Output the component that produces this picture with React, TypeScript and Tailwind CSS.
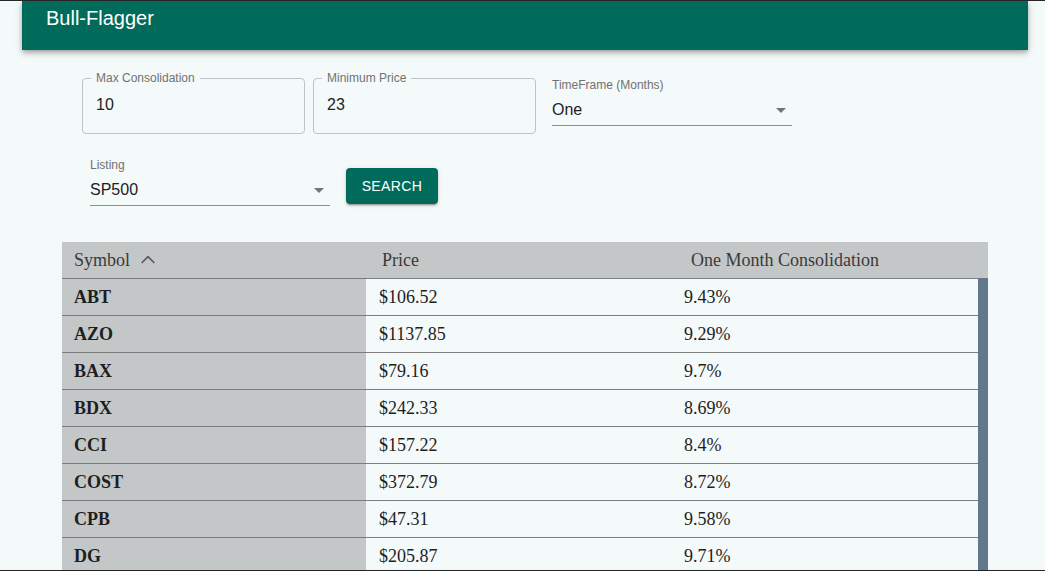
import React from "react";

const rows: [string, string, string][] = [
  ["ABT", "$106.52", "9.43%"],
  ["AZO", "$1137.85", "9.29%"],
  ["BAX", "$79.16", "9.7%"],
  ["BDX", "$242.33", "8.69%"],
  ["CCI", "$157.22", "8.4%"],
  ["COST", "$372.79", "8.72%"],
  ["CPB", "$47.31", "9.58%"],
  ["DG", "$205.87", "9.71%"],
];

function Outlined({ label, value }: { label: string; value: string }) {
  return (
    <div className="relative w-[223px] h-[56px] border border-[#bfc3c3] rounded-[4px]">
      <span className="absolute left-[8px] -top-[8px] px-[5px] bg-[#f4f9f9] text-[12px] leading-[14px] text-[#727272]">
        {label}
      </span>
      <div className="pl-[13px] pt-[16px] text-[16px] leading-[19px] text-[#222]">{value}</div>
    </div>
  );
}

function Arrow() {
  return (
    <svg width="24" height="24" viewBox="0 0 24 24" className="shrink-0">
      <path d="M7 10l5 5 5-5z" fill="#757575" />
    </svg>
  );
}

function SelectField({ label, value }: { label: string; value: string }) {
  return (
    <div className="w-[240px] flex flex-col border-b border-[#8c8f8f] pb-[6px]">
      <div className="text-[12px] leading-[14px] text-[#727272]">{label}</div>
      <div className="mt-[8px] h-[19px] flex items-center justify-between text-[16px] leading-[19px] text-[#222]">
        <span>{value}</span>
        <span className="-mr-[1px] mt-[1px]">
          <Arrow />
        </span>
      </div>
    </div>
  );
}

export default function App() {
  return (
    <div className="h-[571px] overflow-hidden bg-[#f4f9f9] border-t border-b border-[#262626] font-['Liberation_Sans',Arial,sans-serif]">
      <header className="ml-[22px] mr-[17px] h-[49px] bg-[#006b5b] px-6 pt-[5px] shadow-[0_2px_4px_-1px_rgba(0,0,0,0.2),0_4px_5px_0_rgba(0,0,0,0.14),0_1px_10px_0_rgba(0,0,0,0.12)]">
        <h1 className="text-white text-[20px] leading-[24px]">Bull-Flagger</h1>
      </header>

      <div className="mt-[28px] pl-[82px] flex items-start">
        <Outlined label="Max Consolidation" value="10" />
        <div className="ml-[8px]">
          <Outlined label="Minimum Price" value="23" />
        </div>
        <div className="ml-[16px]">
          <SelectField label="TimeFrame (Months)" value="One" />
        </div>
      </div>

      <div className="mt-[24px] pl-[90px] flex items-start">
        <SelectField label="Listing" value="SP500" />
        <button className="ml-[16px] mt-[10px] w-[92px] h-[36px] rounded-[4px] bg-[#006b5b] text-white text-[14px] tracking-[0.4px] shadow-[0_3px_1px_-2px_rgba(0,0,0,0.2),0_2px_2px_0_rgba(0,0,0,0.14),0_1px_5px_0_rgba(0,0,0,0.12)]">
          SEARCH
        </button>
      </div>

      <div className="mt-[36px] ml-[62px] w-[926px] font-['Liberation_Serif','Times_New_Roman',serif] text-[18px]">
        <div className="grid grid-cols-[308px_309px_1fr] h-[36px] items-center bg-[#c4c7c7] text-[#3a3a3a]">
          <div className="pl-3 flex items-center gap-[8px]">
            <span>Symbol</span>
            <svg width="20" height="20" viewBox="0 0 24 24" fill="none" stroke="#5a5a5a" strokeWidth="2" strokeLinecap="round" strokeLinejoin="round">
              <path d="M5 15l7-7 7 7" />
            </svg>
          </div>
          <div className="pl-3">Price</div>
          <div className="pl-3">One Month Consolidation</div>
        </div>
        <div className="flex">
          <div className="w-[916px]">
            {rows.map(([s, p, c]) => (
              <div key={s} className="grid grid-cols-[304px_305px_1fr] h-[37px] border-t border-[#7c7e7e] text-[#1e1e1e]">
                <div className="bg-[#c4c7c7] pl-3 flex items-center font-bold">{s}</div>
                <div className="pl-[13px] flex items-center">{p}</div>
                <div className="pl-[13px] flex items-center">{c}</div>
              </div>
            ))}
          </div>
          <div className="w-[10px] bg-[#64788c]" />
        </div>
      </div>
    </div>
  );
}
